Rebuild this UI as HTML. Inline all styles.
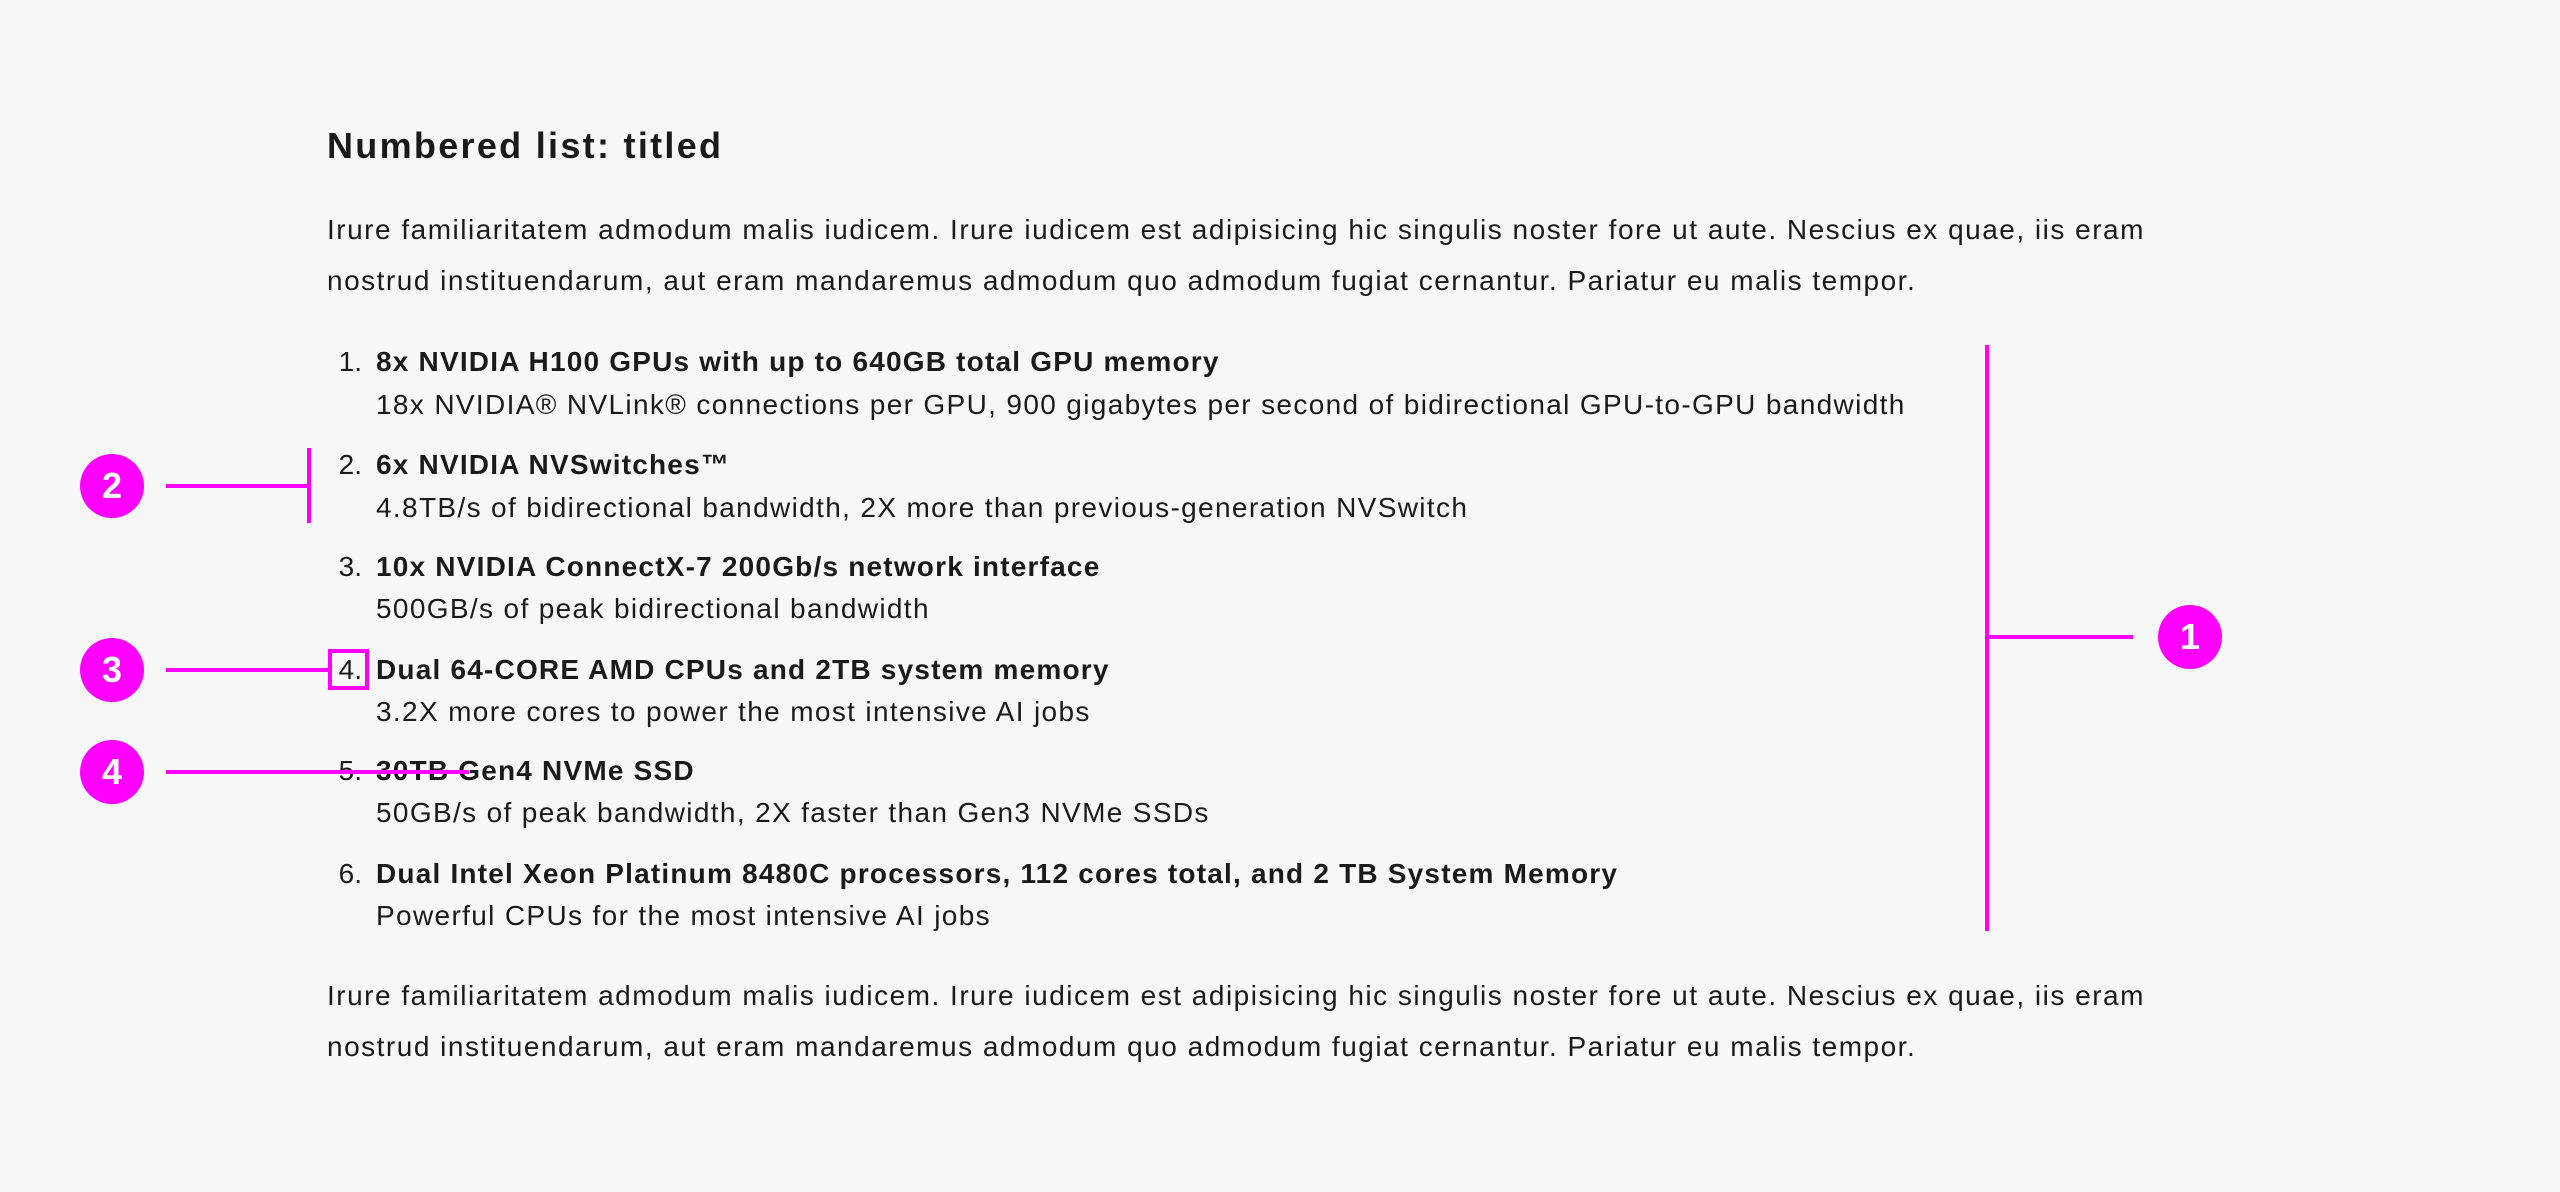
<!DOCTYPE html>
<html><head><meta charset="utf-8"><style>
html,body{margin:0;padding:0;background:#f7f7f7;width:2560px;height:1192px;overflow:hidden}
body{position:relative;font-family:"Liberation Sans",sans-serif;color:#1a1a1a}
.t{position:absolute;white-space:nowrap;font-size:28px;line-height:40px;letter-spacing:1.35px}
.p{letter-spacing:1.5px}
.b{font-weight:bold;letter-spacing:1.2px}
.n{position:absolute;white-space:nowrap;font-size:28px;line-height:40px;text-align:right;width:40px;left:322px}
.m{position:absolute;background:#ff00ff}
.c{position:absolute;width:64px;height:64px;border-radius:50%;background:#ff00ff;color:#fff;font-weight:bold;font-size:36px;line-height:64px;text-align:center}
</style></head><body>
<div class="t b" style="left:327px;top:124px;font-size:36px;line-height:44px;letter-spacing:2.3px">Numbered list: titled</div>
<div class="t p" style="left:327px;top:210px">Irure familiaritatem admodum malis iudicem. Irure iudicem est adipisicing hic singulis noster fore ut aute. Nescius ex quae, iis eram</div>
<div class="t p" style="left:327px;top:261px">nostrud instituendarum, aut eram mandaremus admodum quo admodum fugiat cernantur. Pariatur eu malis tempor.</div>

<div class="n" style="top:342px">1.</div>
<div class="t b" style="left:376px;top:342px">8x NVIDIA H100 GPUs with up to 640GB total GPU memory</div>
<div class="t" style="left:376px;top:385px">18x NVIDIA® NVLink® connections per GPU, 900 gigabytes per second of bidirectional GPU-to-GPU bandwidth</div>

<div class="n" style="top:445px">2.</div>
<div class="t b" style="left:376px;top:445px">6x NVIDIA NVSwitches™</div>
<div class="t" style="left:376px;top:488px">4.8TB/s of bidirectional bandwidth, 2X more than previous-generation NVSwitch</div>

<div class="n" style="top:547px">3.</div>
<div class="t b" style="left:376px;top:547px">10x NVIDIA ConnectX-7 200Gb/s network interface</div>
<div class="t" style="left:376px;top:589px">500GB/s of peak bidirectional bandwidth</div>

<div class="n" style="top:650px">4.</div>
<div class="t b" style="left:376px;top:650px">Dual 64-CORE AMD CPUs and 2TB system memory</div>
<div class="t" style="left:376px;top:692px">3.2X more cores to power the most intensive AI jobs</div>

<div class="n" style="top:751px">5.</div>
<div class="t b" style="left:376px;top:751px">30TB Gen4 NVMe SSD</div>
<div class="t" style="left:376px;top:793px">50GB/s of peak bandwidth, 2X faster than Gen3 NVMe SSDs</div>

<div class="n" style="top:854px">6.</div>
<div class="t b" style="left:376px;top:854px">Dual Intel Xeon Platinum 8480C processors, 112 cores total, and 2 TB System Memory</div>
<div class="t" style="left:376px;top:896px">Powerful CPUs for the most intensive AI jobs</div>

<div class="t p" style="left:327px;top:976px">Irure familiaritatem admodum malis iudicem. Irure iudicem est adipisicing hic singulis noster fore ut aute. Nescius ex quae, iis eram</div>
<div class="t p" style="left:327px;top:1027px">nostrud instituendarum, aut eram mandaremus admodum quo admodum fugiat cernantur. Pariatur eu malis tempor.</div>

<div class="m" style="left:1985px;top:345px;width:4px;height:586px"></div>
<div class="m" style="left:1987px;top:635px;width:146px;height:4px"></div>
<div class="c" style="left:2158px;top:605px">1</div>
<div class="c" style="left:80px;top:454px">2</div>
<div class="m" style="left:166px;top:484px;width:144px;height:4px"></div>
<div class="m" style="left:307px;top:448px;width:4px;height:75px"></div>
<div class="c" style="left:80px;top:638px">3</div>
<div class="m" style="left:166px;top:668px;width:164px;height:4px"></div>
<div style="position:absolute;left:328px;top:649px;width:33px;height:33px;border:4px solid #ff00ff"></div>
<div class="c" style="left:80px;top:740px">4</div>
<div class="m" style="left:166px;top:770px;width:303px;height:4px"></div>
</body></html>
